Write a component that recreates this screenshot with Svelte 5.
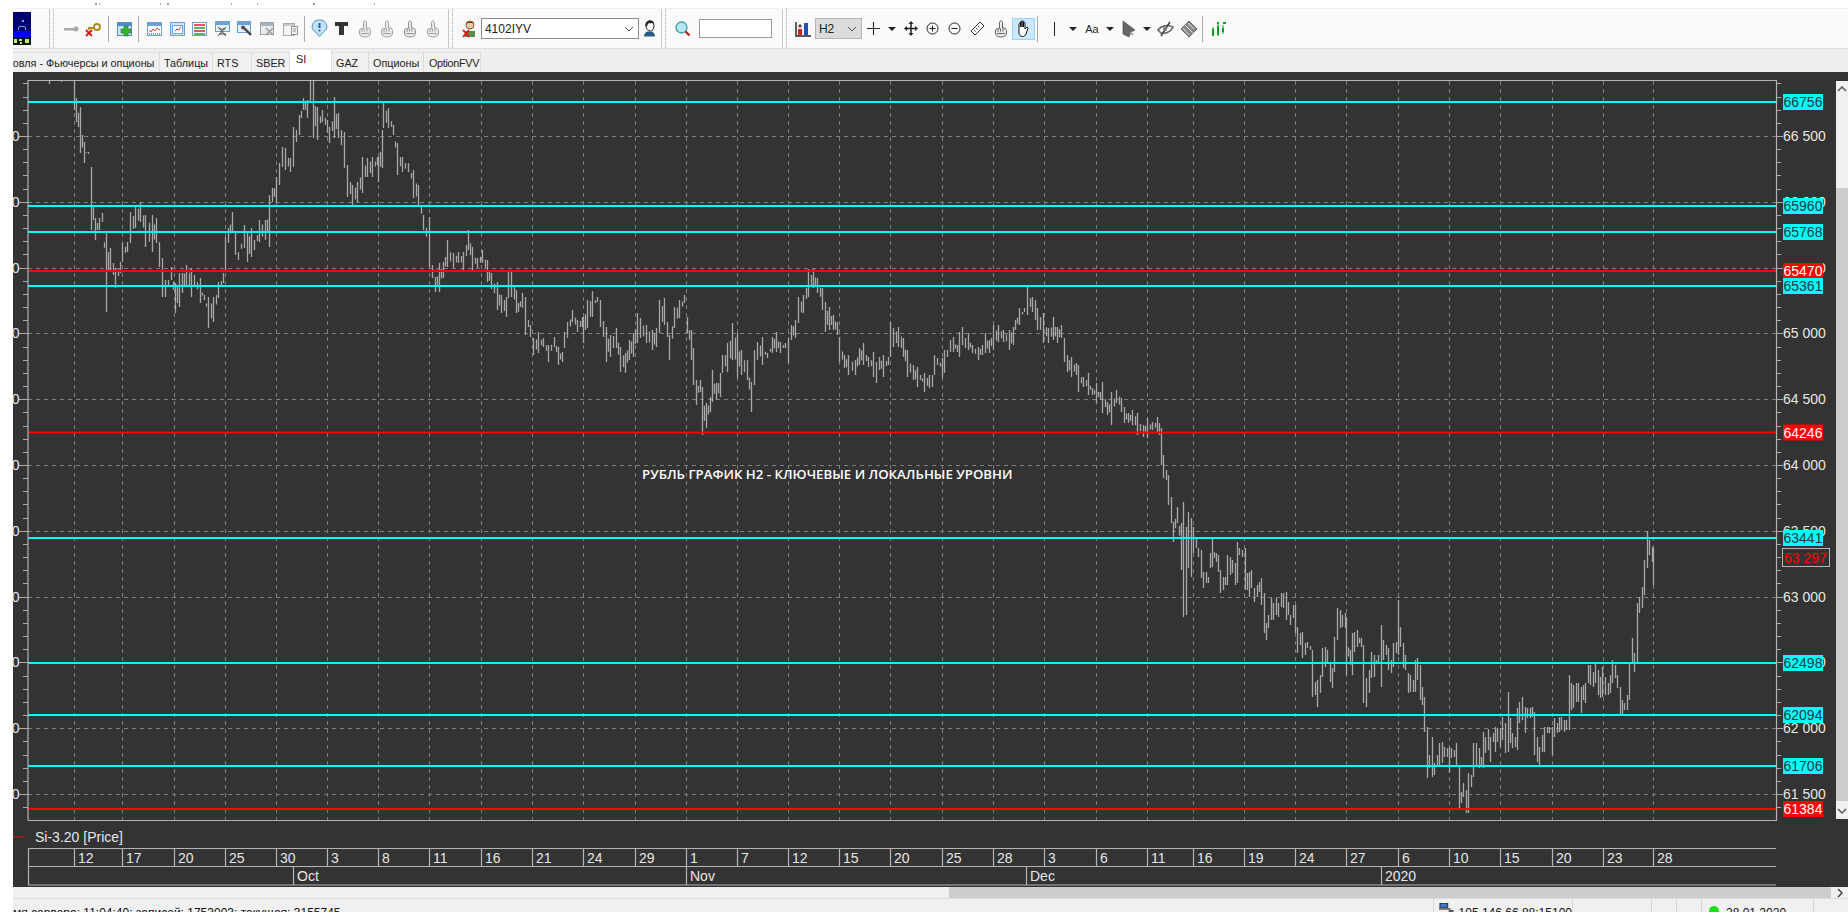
<script>
  const raw = "49 80 84,61 80 82,74 80 110,76 98 122,80 107 153,84 142 163,88 152 154,91 167 230,95 218 240,99 218 230,102 213 222,106 233 312,108 252 270,110 248 272,115 268 288,120 262 273,122 243 262,127 242 252,130 212 243,135 207 228,140 202 222,145 215 247,152 215 252,156 218 243,159 242 267,162 258 297,165 280 297,168 280 287,171 267 280,175 283 313,179 273 307,182 273 293,186 265 287,191 268 297,194 275 287,200 278 303,204 295 300,208 297 328,213 297 322,218 282 298,223 273 283,225 237 270,228 228 243,232 212 233,235 233 255,238 252 260,244 225 248,247 233 262,251 228 257,254 240 250,259 220 242,265 220 240,269 195 247,272 188 202,276 177 203,279 163 185,282 147 167,285 148 170,290 158 172,293 127 167,299 115 135,303 98 110,307 100 118,310 80 102,313 80 138,317 107 140,322 110 122,327 120 133,329 127 143,334 97 138,338 113 138,344 132 168,347 165 197,352 185 205,357 182 202,362 157 193,367 158 177,372 157 177,377 157 165,378 157 182,382 130 168,383 103 128,388 108 128,393 125 135,397 143 175,402 157 172,408 163 172,413 170 198,418 185 207,423 215 230,429 217 267,432 265 278,435 277 292,439 263 292,443 262 278,447 240 267,453 253 268,458 252 263,463 252 270,468 230 250,472 247 270,477 258 268,482 250 263,487 260 282,491 273 289,497 282 310,501 295 313,506 297 317,508 270 298,511 270 297,516 290 313,518 303 312,522 293 308,525 297 335,530 325 337,533 338 355,538 332 353,543 338 347,548 345 362,554 337 347,558 347 365,562 352 362,564 332 348,567 322 338,572 310 322,577 320 332,582 317 327,583 317 343,587 300 328,592 291 317,597 297 302,600 300 327,606 327 362,610 335 357,616 328 348,620 347 372,625 353 373,629 340 360,633 333 357,637 313 343,640 318 338,646 325 343,652 330 350,656 328 347,659 300 333,664 298 325,669 335 360,674 307 328,679 300 318,684 295 303,687 317 333,691 330 360,693 348 385,696 380 405,700 380 392,702 387 435,706 403 428,710 397 412,712 370 402,716 383 400,720 373 397,722 355 373,727 343 372,732 323 360,737 333 378,741 350 375,747 360 380,751 382 412,754 350 385,757 342 360,762 337 365,767 353 358,772 337 353,776 332 352,780 342 353,785 343 348,788 338 363,791 325 340,795 320 338,798 297 323,803 295 313,808 269 297,813 269 288,817 278 293,822 288 310,825 302 332,829 307 330,833 315 330,837 322 335,839 337 362,844 355 368,848 355 375,855 360 375,859 348 365,863 343 365,868 357 367,873 352 377,876 362 383,879 357 370,883 355 377,888 357 365,890 322 357,893 328 347,898 327 347,903 338 357,907 350 377,913 365 380,917 367 387,920 375 380,924 373 392,929 375 388,932 375 387,934 355 375,937 358 365,942 358 378,944 350 373,947 350 357,950 340 352,953 337 352,957 345 352,959 332 357,962 327 345,965 338 348,968 333 350,972 345 353,978 347 360,982 345 355,985 333 353,989 340 353,993 325 350,998 325 342,1003 330 342,1009 330 350,1013 327 345,1015 320 330,1019 308 325,1024 308 312,1027 287 315,1032 297 312,1035 300 320,1037 308 330,1043 313 343,1048 328 343,1053 317 340,1057 327 343,1061 325 338,1064 338 362,1067 355 372,1071 357 377,1076 363 375,1078 365 392,1083 377 387,1088 373 395,1092 388 395,1096 383 403,1100 392 400,1102 382 413,1107 402 415,1111 392 425,1116 390 403,1121 398 412,1124 407 423,1128 413 423,1132 410 425,1137 413 435,1143 425 437,1147 418 438,1152 422 430,1157 417 432,1159 423 435,1161 428 465,1163 455 478,1166 470 480,1168 475 505,1171 497 523,1173 522 542,1177 507 523,1181 523 570,1183 502 617,1186 527 615,1188 512 568,1191 518 577,1193 527 553,1196 537 548,1198 548 557,1201 550 578,1203 572 588,1206 572 583,1208 577 583,1210 553 568,1212 538 567,1216 553 562,1218 555 572,1220 570 593,1223 577 590,1225 577 585,1227 555 585,1230 557 575,1232 560 573,1235 563 585,1237 542 583,1239 548 555,1242 550 557,1245 548 590,1247 573 590,1249 572 597,1251 570 588,1254 588 602,1257 585 597,1259 582 592,1261 578 605,1264 593 633,1266 623 640,1268 615 628,1271 598 620,1273 603 620,1276 598 615,1278 603 617,1281 593 607,1283 593 608,1286 592 620,1288 602 615,1290 615 625,1293 605 618,1295 605 633,1297 627 653,1300 633 645,1302 632 658,1305 643 655,1307 642 648,1310 646 650,1312 650 697,1315 682 695,1317 680 707,1320 675 693,1322 648 677,1325 647 667,1327 650 662,1330 663 682,1332 668 688,1334 637 672,1337 608 640,1340 610 628,1342 615 627,1345 613 628,1346 618 675,1350 650 665,1352 633 675,1354 632 652,1357 630 647,1361 638 647,1363 645 703,1366 678 707,1369 670 693,1371 652 678,1374 655 677,1378 655 662,1381 625 687,1383 640 660,1386 645 655,1388 648 670,1391 660 673,1393 643 667,1396 642 653,1398 600 655,1400 627 647,1403 643 668,1405 655 670,1408 673 693,1410 675 692,1413 680 692,1415 660 692,1417 658 680,1420 665 700,1422 687 705,1424 697 732,1427 727 778,1429 755 768,1432 737 777,1434 763 775,1437 755 765,1439 743 765,1442 742 763,1444 747 757,1447 748 757,1449 747 773,1451 748 758,1454 750 757,1456 743 767,1459 767 808,1461 792 803,1463 783 797,1466 790 813,1468 773 813,1471 775 787,1473 743 777,1476 743 765,1479 748 768,1481 757 765,1483 732 768,1485 737 753,1488 729 750,1490 737 762,1493 733 742,1495 727 752,1497 728 742,1500 728 747,1502 717 740,1505 723 753,1508 692 752,1510 718 743,1512 733 748,1515 737 747,1517 708 750,1519 702 723,1522 697 720,1525 707 733,1527 708 718,1530 708 718,1532 707 717,1534 712 755,1537 737 762,1539 747 765,1542 735 752,1544 727 752,1547 727 733,1549 727 733,1552 727 755,1554 718 737,1557 723 733,1559 717 732,1561 717 730,1564 720 732,1566 720 730,1569 675 730,1571 683 710,1573 685 708,1576 683 702,1578 683 702,1581 687 713,1583 685 700,1585 683 703,1588 665 683,1590 665 685,1593 672 687,1595 663 683,1598 670 695,1600 677 698,1602 667 697,1605 677 695,1608 683 695,1610 675 693,1612 660 683,1615 665 678,1617 675 688,1620 687 715,1622 700 715,1624 703 710,1627 695 710,1629 663 700,1632 638 662,1634 653 672,1637 603 663,1639 597 613,1642 587 608,1644 560 595,1647 531 568,1649 540 555,1652 547 562,1653 548 585";

  const traced = raw.split(",").map((s) => s.split(" ").map(Number));
  const bars = [];
  traced.forEach((b, i) => {
    bars.push(b);
    const n = traced[i + 1];
    if (n && n[0] - b[0] >= 4 && b[0] > 70) {
      const mid = (b[1] + b[2] + n[1] + n[2]) / 4;
      const half = Math.min(b[2] - b[1], n[2] - n[1]) * 0.3;
      bars.push([Math.round((b[0] + n[0]) / 2), mid - half, mid + half]);
    }
  });
  const barPath = bars.map(([x, a, b]) => `M${x + 0.5} ${a}V${b}`).join("");

  const Y = (v) => 136 + (66500 - v) * 0.1316;
  const ticksX = [74,122,174,225,276,327,378,429,481,532,583,635,686,737,788,839,890,942,993,1044,1096,1147,1193,1244,1295,1346,1398,1449,1500,1552,1603,1653];
  const dayLabels = [12,17,20,25,30,3,8,11,16,21,24,29,1,7,12,15,20,25,28,3,6,11,16,19,24,27,6,10,15,20,23,28];
  const months = [["Oct",293],["Nov",686],["Dec",1026],["2020",1381]];
  const majors = [66500,66000,65500,65000,64500,64000,63500,63000,62500,62000,61500];
  const fmt = (v) => String(v).slice(0,2) + " " + String(v).slice(2);
  const minor = [];
  for (let k = -4; k <= 51; k++) {
    const y = 136 + k * 13.16;
    if (y > 81 && y < 819) minor.push(Math.round(y) + 0.5);
  }
  const levels = [
    [66756,"c",102],[65960,"c",206],[65768,"c",232],[65470,"r",271],[65361,"c",286],
    [64246,"r",432.5],[63441,"c",538],[62498,"c",663],[62094,"c",715],[61706,"c",766],[61384,"r",809]
  ];
  const minorPath = minor.map((y) => `M23 ${y}H28M1776 ${y}H1781`).join("");
  const topMarks = [95,99,160,167,231,257,313,374];
  const tabs = [
    ["товля - Фьючерсы и опционы", 147, "first"],
    ["Таблицы", 53, ""],["RTS", 39, ""],["SBER", 38, ""],["SI", 42, "active"],
    ["GAZ", 37, ""],["Опционы", 55, ""],["OptionFVV", 57, "tight"]
  ];
</script>

{#snippet chev()}
  <svg class="chev" width="10" height="6" viewBox="0 0 10 6"><path d="M1 1l4 4 4-4" fill="none" stroke="#555" stroke-width="1"/></svg>
{/snippet}

{#snippet hand(c)}
  <svg width="14" height="18" viewBox="0 0 14 18"><path d="M5.500 2.500c0-2 3-2 3 0V8h1.500c1.500 0 2.500 1 2.500 2.500V13c0 2.500-2 4-5.500 4S1.500 15.500 1.500 13v-2c0-1.500 1-2.500 2-2.500h2z" fill="#e9e9e9" stroke={c}/><path d="M4 9v3M6.500 8.500v3M9 8.500v3M3 13.500h8" stroke={c} fill="none"/></svg>
{/snippet}

<div class="page">
  <div class="strip">
    {#each topMarks as x, i}
      <i class="mark" class:wide={i % 3 === 0} style="left:{x}px"></i>
    {/each}
  </div>

  <div class="toolbar">
    <div class="logo">
      <svg width="18" height="33" viewBox="0 0 18 33"><rect width="18" height="33" fill="#00006e"/><rect y="19" width="18" height="6" fill="#0000f0"/><rect y="25" width="18" height="8" fill="#041a08"/><path d="M9 8h2v2H9zM5 15h1v3H5zM6 14h6v1H6zM12 15h1v3h-1z" fill="#5fb0e0"/><path d="M1 27h3v4H1zM6 27h3v2H6zM7 30h2v2H7zM12 27h4v4h-4z" fill="#c8e878"/></svg>
    </div>
    <span class="grip ml18"></span>
    <span class="ic ml6"><svg width="16" height="16" viewBox="0 0 16 16"><circle cx="13" cy="8" r="2.500" fill="#a8a8a8"/><rect x="1" y="7" width="10" height="2.500" fill="#a8a8a8"/></svg></span>
    <span class="ic"><svg width="16" height="16" viewBox="0 0 16 16"><circle cx="12" cy="6" r="3" fill="none" stroke="#a88a10" stroke-width="1.800"/><path d="M9 7H4v2" fill="none" stroke="#a88a10" stroke-width="1.800"/><path d="M1 9l6 6M7 9l-6 6" stroke="#e01010" stroke-width="1.800"/></svg></span>
    <span class="sep ml4"></span>
    <span class="ic ml5"><svg width="16" height="16" viewBox="0 0 16 16"><rect x=".5" y="1.500" width="14" height="13" fill="#cfe4f7" stroke="#5a8fc8"/><rect x="1" y="2" width="13" height="3" fill="#4f8ccf"/><path d="M7 5h4v3h3v4h-3v3H7v-3H4V8h3z" fill="#35b535" stroke="#1b7d1b" stroke-width=".6"/></svg></span>
    <span class="sep ml2"></span>
    <span class="wins ml4">
      <span class="ic23"><svg width="15" height="14" viewBox="0 0 15 14"><rect x=".5" y=".5" width="14" height="13" fill="#fff" stroke="#6a9fd8"/><rect x="1" y="1" width="13" height="3" fill="#6a9fd8"/><path d="M2 8l2 2 2-3 2 2 2-3 3 2" fill="none" stroke="#d04040"/><path d="M2 12h11" stroke="#3a7ac0" stroke-width="1.500" stroke-dasharray="1 1"/></svg></span>
      <span class="ic23"><svg width="15" height="14" viewBox="0 0 15 14"><rect x=".5" y=".5" width="14" height="13" fill="#cfe4f7" stroke="#6a9fd8"/><rect x="2.500" y="3.500" width="10" height="8" fill="#fff" stroke="#6a9fd8"/><path d="M5 9l2-2 2 1 2-3" fill="none" stroke="#d04040"/></svg></span>
      <span class="ic23"><svg width="15" height="14" viewBox="0 0 15 14"><rect x=".5" y=".5" width="14" height="13" fill="#fff" stroke="#6a9fd8"/><path d="M2 3h11" stroke="#d82020" stroke-width="1.500"/><path d="M2 6h11" stroke="#2a9a2a" stroke-width="1.500"/><path d="M2 9h11" stroke="#d82020" stroke-width="1.500"/><path d="M2 12h11" stroke="#2a9a2a" stroke-width="1.500"/></svg></span>
      <span class="ic23"><svg width="15" height="16" viewBox="0 0 15 16"><rect x=".5" y=".5" width="14" height="10" fill="#eaf3fb" stroke="#6a9fd8"/><rect x="1" y="1" width="13" height="3" fill="#6a9fd8"/><path d="M3 6l8 9M11 6l-8 9M4 13h7M5 8h5" stroke="#444" fill="none"/></svg></span>
      <span class="ic23"><svg width="16" height="15" viewBox="0 0 16 15"><rect x=".5" y=".5" width="13" height="11" fill="#e4f0fa" stroke="#6a9fd8"/><rect x="1" y="1" width="12" height="3" fill="#6a9fd8"/><path d="M6 6l8 8" stroke="#444" stroke-width="2.400"/><circle cx="6" cy="6.500" r="2" fill="#555"/></svg></span>
      <span class="ic23"><svg width="15" height="14" viewBox="0 0 15 14"><rect x=".5" y=".5" width="13" height="12" fill="#ececec" stroke="#9aa4ae"/><rect x="1" y="1" width="12" height="3" fill="#aab4be"/><path d="M6 6l7 7M13 6l-7 7" stroke="#9a9a9a" stroke-width="1.500"/></svg></span>
      <span class="ic23"><svg width="15" height="14" viewBox="0 0 15 14"><rect x=".5" y="1.500" width="11" height="12" fill="#f6f6f6" stroke="#aaa"/><rect x="1" y="2" width="10" height="2" fill="#c4cad0"/><rect x="8.500" y="4.500" width="6" height="8" fill="#eee" stroke="#999"/><path d="M10 7h3M10 9h3" stroke="#999"/></svg></span>
    </span>
    <span class="sep ml2"></span>
    <span class="wins ml3">
      <span class="ic23"><svg width="17" height="19" viewBox="0 0 17 19"><path d="M8.500 1a7 6.500 0 0 1 4 12l-4 4.500-4-4.500a7 6.500 0 0 1 4-12z" fill="#bfe2f7" stroke="#5792c0"/><path d="M8.500 4v5" stroke="#2c5f9e" stroke-width="2"/><circle cx="8.500" cy="11.500" r="1.100" fill="#2c5f9e"/></svg></span>
      <span class="ic23"><svg width="15" height="15" viewBox="0 0 15 15"><path d="M1 1h13v4h-4v9H5V5H1z" fill="#333"/></svg></span>
      <span class="ic23">{@render hand("#a0a0a0")}</span>
      <span class="ic23">{@render hand("#a0a0a0")}</span>
      <span class="ic23">{@render hand("#909090")}</span>
      <span class="ic23">{@render hand("#a0a0a0")}</span>
    </span>
    <span class="grip ml4"></span>
    <span class="ic ml6"><svg width="16" height="18" viewBox="0 0 16 18"><circle cx="8" cy="5" r="4" fill="#eec9a0" stroke="#6a4020" stroke-width=".8"/><path d="M4 4c0-3 8-3 8 0l-2-1H6z" fill="#6a3a15"/><path d="M3 11h10v6H3z" fill="#5a8a4a"/><path d="M1 10l6 7M7 10l-6 7" stroke="#e01010" stroke-width="1.800"/></svg></span>
    <div class="combo acct"><span>4102IYV</span>{@render chev()}</div>
    <span class="ic"><svg width="13" height="17" viewBox="0 0 13 17"><path d="M3 6c0-4 2-5 4-5s4 1.500 4 5c0 3-1.500 5-3.500 5S3 9 3 6z" fill="#fff" stroke="#222"/><path d="M2.500 6C2 2 5 .5 7 .5s4.500 1.500 4 4l-2-1.500-4 .5-1 3z" fill="#222"/><path d="M1 16.500c0-3 2-5 4-5h3c2 0 4 2 4 5z" fill="#2a5a8a"/></svg></span>
    <span class="grip"></span>
    <span class="ic ml6"><svg width="16" height="16" viewBox="0 0 16 16"><circle cx="6.500" cy="6.500" r="5.500" fill="#b8e6f0" stroke="#3a9ab0" stroke-width="1.300"/><path d="M10.500 10.500l4 4" stroke="#c22020" stroke-width="2.400"/></svg></span>
    <span class="search ml5"></span>
    <span class="grip ml10"></span>
    <span class="ic ml5"><svg width="16" height="16" viewBox="0 0 16 16"><path d="M1 1v14h15" fill="none" stroke="#222" stroke-width="1.400"/><rect x="3" y="8" width="4" height="6" fill="#e02020"/><rect x="9" y="2" width="4" height="12" fill="#2050c0"/><path d="M5 3v4M3 5h4" stroke="#222"/></svg></span>
    <div class="combo tf"><span>H2</span>{@render chev()}</div>
    <span class="ic ml1"><svg width="13" height="13" viewBox="0 0 13 13"><path d="M6.500 0v13M0 6.500h13" stroke="#222" stroke-width="1.100"/></svg></span>
    <span class="ar"></span>
    <span class="ic ml1"><svg width="14" height="15" viewBox="0 0 14 15"><path d="M7 0l2.500 3h-5zM7 15l2.500-3h-5zM0 7.500l3-2.500v5zM14 7.500l-3-2.500v5z" fill="#222"/><path d="M7 2v11M2 7.500h10" stroke="#222" stroke-width="1.500"/></svg></span>
    <span class="ic"><svg width="13" height="13" viewBox="0 0 13 13"><circle cx="6.500" cy="6.500" r="5.500" fill="none" stroke="#222"/><path d="M6.500 3.500v6M3.500 6.500h6" stroke="#222"/></svg></span>
    <span class="ic"><svg width="13" height="13" viewBox="0 0 13 13"><circle cx="6.500" cy="6.500" r="5.500" fill="none" stroke="#222"/><path d="M3.500 6.500h6" stroke="#222"/></svg></span>
    <span class="ic ml1"><svg width="15" height="15" viewBox="0 0 15 15"><path d="M10 1l4 4-9 9-4-4z" fill="#fff" stroke="#333"/><path d="M4 9l1.500 1.500M6 7l1.500 1.500M8 5l1.500 1.500" stroke="#333"/></svg></span>
    <span class="ic ml1">{@render hand("#666")}</span>
    <span class="active-tool">
      <svg width="15" height="17" viewBox="0 0 15 17"><path d="M3 9V4c0-1 1.500-1 1.500 0v3-5c0-1 1.500-1 1.500 0v5V1.500c0-1 1.500-1 1.500 0V7V3c0-1 1.500-1 1.500 0v6l1.500-1.500c1-.8 2 .2 1.300 1.200L10 14c-.8 1.500-1.500 2.500-3.500 2.500S3 15 3 13z" fill="#fff" stroke="#111"/></svg>
    </span>
    <span class="sep ml2"></span>
    <span class="ic ml6"><svg width="3" height="14" viewBox="0 0 3 14"><path d="M1.500 0v14" stroke="#222"/></svg></span>
    <span class="ar"></span>
    <span class="ic ml1 aa">Aa</span>
    <span class="ar"></span>
    <span class="ic ml1"><svg width="16" height="18" viewBox="0 0 16 18"><path d="M2 1l8 6 4 3-4 2-2 5-6-3z" fill="#666" stroke="#444" stroke-width=".6"/><path d="M9 12l3 3" stroke="#999" stroke-width="1.500"/></svg></span>
    <span class="ar"></span>
    <span class="ic ml1"><svg width="17" height="16" viewBox="0 0 17 16"><path d="M1 9c3-4 9-6 15-3-2 5-8 7-12 6z" fill="none" stroke="#666" stroke-width="1.600"/><path d="M13 1L4 15" stroke="#444" stroke-width="1.600"/><circle cx="8" cy="8" r="2" fill="#777"/></svg></span>
    <span class="ic ml1"><svg width="18" height="18" viewBox="0 0 18 18"><path d="M1 9l8-8 8 8-8 8z" fill="#8a8a8a" stroke="#666"/><path d="M5 5l8 8M8 3l6 6M3 8l6 7" stroke="#d8d8d8"/></svg></span>
    <span class="sep ml2"></span>
    <span class="ic ml5"><svg width="16" height="16" viewBox="0 0 16 16"><path d="M1 8h2v7H1zM6 5h2v9H6zM6 1h2v2H6zM11 7h2v4h-2zM12 1h3v2h-3z" fill="#0aa020"/><path d="M2 6v9M7 3v12M12 4v9" stroke="#0aa020"/></svg></span>
  </div>

  <div class="tabs">
    {#each tabs as [label, w, kind]}
      <div class="tab {kind}" style="width:{w}px"><span>{label}</span></div>
    {/each}
  </div>

  <div class="main">
    <svg class="chart" width="1823" height="815" viewBox="13 72 1823 815">
      <g class="grid">
        {#each ticksX as x}<path d="M{x + 0.5} 81V820"/>{/each}
        {#each majors as v}<path d="M28 {Math.round(Y(v)) + 0.5}H1776"/>{/each}
      </g>
      <path class="bars" d={barPath}/>
      <g class="levels">
        {#each levels as [v, c, y]}
          <path class={c} d="M28 {y}H1776"/>
        {/each}
      </g>
      <path class="ticks" d={minorPath}/>
      <g class="ticks">
        {#each majors as v}<path d="M19 {Math.round(Y(v)) + 0.5}H28M1776 {Math.round(Y(v)) + 0.5}H1783"/>{/each}
      </g>
      <path class="frame" d="M28 820.5V80.500H1776.500V820.500H28"/>

      {#each majors as v}
        <text class="ax" x="1783" y={Y(v) + 5}>{fmt(v)}</text>
        <text class="ax" x="19.500" y={Y(v) + 5} text-anchor="end">{fmt(v)}</text>
      {/each}

      {#each levels as [v, c, y]}
        <rect class={c} x="1783" y={y - 8} width="40" height="16"/>
        <text class="lv {c}" x="1783.500" y={y + 5}>{v}</text>
      {/each}

      <rect class="last" x="1782.500" y="548.500" width="47" height="18"/>
      <text class="lastt" x="1784" y="563">63 297</text>

      <text class="title" x="642" y="478.500">РУБЛЬ ГРАФИК Н2 - КЛЮЧЕВЫЕ И ЛОКАЛЬНЫЕ УРОВНИ</text>

      <path class="legend" d="M13 837H25"/>
      <text class="ax" x="35" y="842">Si-3.20 [Price]</text>

      <path class="frame" d="M28 848.500H1776M28 866.500H1776M28 885H1776M28.500 848V885"/>
      {#each ticksX as x, i}
        <path class="frame" d="M{x + 0.5} 848V866"/>
        <text class="ax" x={x + 4} y="863">{dayLabels[i]}</text>
      {/each}
      {#each months as [m, x]}
        <path class="frame" d="M{x + 0.5} 866V885"/>
        <text class="ax" x={x + 4} y="881">{m}</text>
      {/each}
    </svg>
    <div class="vscroll">
      <div class="vtrack">
        <svg width="10" height="7" viewBox="0 0 10 7"><path d="M1 6l4-4 4 4" fill="none" stroke="#555" stroke-width="1.500"/></svg>
        <div class="vthumb"></div>
        <svg width="10" height="7" viewBox="0 0 10 7"><path d="M1 1l4 4 4-4" fill="none" stroke="#555" stroke-width="1.500"/></svg>
      </div>
    </div>
  </div>

  <div class="hscroll">
    <div class="hthumb"></div>
    <svg width="8" height="10" viewBox="0 0 8 10"><path d="M2 1l4 4-4 4" fill="none" stroke="#444" stroke-width="1.500"/></svg>
  </div>

  <div class="status">
    <span class="st-text">мя сервера: 11:04:40; записей: 1753003; текущая: 3155745</span>
    <span class="cell net">
      <svg width="15" height="10" viewBox="0 0 15 10"><rect x="1" y="0" width="8" height="5" fill="#3a7ac0" stroke="#223"/><rect x="0" y="5" width="12" height="2" fill="#777"/><rect x="10" y="7" width="5" height="3" fill="#555"/></svg>
      <span>105.146.66.88:15100</span>
    </span>
    <span class="cell c2"></span>
    <span class="cell c3"></span>
    <span class="cell c3"></span>
    <span class="cell date"><i class="led"></i><span>28.01.2020</span></span>
    <span class="cell end"></span>
  </div>
</div>

<style>
  :global(body) { margin: 0; overflow: hidden; background: #fff; }
  .page { width: 1848px; height: 912px; display: flex; flex-direction: column; font-family: "Liberation Sans", Arial, sans-serif; background: #fff; overflow: hidden; }

  .strip { height: 8px; position: relative; background: #fff; flex: none; }
  .mark { position: absolute; top: 3px; width: 1px; height: 2px; background: #aaa; }
  .mark.wide { width: 2px; background: #999; }

  .toolbar { height: 41px; flex: none; box-sizing: border-box; margin-left: 13px; display: flex; align-items: center; background: #fafafa; border-top: 1px solid #f0f0f0; border-bottom: 1px solid #dedede; }
  .logo { height: 33px; width: 18px; flex: none; line-height: 0; }
  .grip { width: 5px; height: 39px; flex: none; box-sizing: border-box; border-left: 1px solid #c8c8c8; border-right: 1px dotted #a8a8a8; }
  .ic { width: 22px; height: 24px; flex: none; display: flex; align-items: center; justify-content: center; }
  .ic23 { width: 22.7px; height: 24px; flex: none; display: flex; align-items: center; justify-content: center; }
  .wins { display: flex; flex: none; }
  .sep { width: 1px; height: 26px; background: #a9a9a9; flex: none; }
  .ar { width: 0; height: 0; flex: none; margin: 0 3px; border-left: 4px solid transparent; border-right: 4px solid transparent; border-top: 4px solid #222; }
  .aa { font-size: 11px; color: #222; }
  .ml1 { margin-left: 1px; } .ml2 { margin-left: 2px; } .ml3 { margin-left: 3px; } .ml4 { margin-left: 4px; } .ml5 { margin-left: 5px; } .ml6 { margin-left: 6px; } .ml10 { margin-left: 10px; } .ml18 { margin-left: 18px; }

  .combo { height: 21px; box-sizing: border-box; flex: none; display: flex; align-items: center; justify-content: space-between; padding: 0 3px; font-size: 12px; color: #222; border: 1px solid #8c8c8c; background: #fff; }
  .acct { width: 158px; }
  .tf { width: 47px; margin-left: 1px; background: #dcdcdc; border-color: #b5b5b5; }
  .chev { margin-right: 1px; }
  .search { width: 73px; height: 19px; box-sizing: border-box; flex: none; background: #fff; border: 1.5px solid #9a9a9a; }
  .active-tool { width: 23px; height: 22px; box-sizing: border-box; flex: none; display: flex; align-items: center; justify-content: center; background: #cce8ff; border: 1px solid #99d1ff; }

  .tabs { height: 23px; flex: none; margin-left: 13px; display: flex; align-items: flex-end; background: #efefef; overflow: hidden; }
  .tab { height: 20px; box-sizing: border-box; flex: none; padding: 3px 0 0 4px; font-size: 10.800px; line-height: 14px; color: #222; white-space: nowrap; overflow: hidden; background: #f0f0f0; border-right: 1px solid #dcdcdc; border-top: 1px solid #e2e2e2; }
  .tab.first { padding-left: 0; }
  .tab.first span { margin-left: -5px; display: inline-block; }
  .tab.active { height: 22px; background: #fff; padding-top: 2px; padding-left: 6px; border-top: 0; }
  .tab.tight { letter-spacing: -0.3px; padding-left: 5px; }

  .main { height: 815px; flex: none; margin-left: 13px; display: flex; background: #333; }
  .chart { display: block; flex: none; }
  .vscroll { width: 12px; flex: none; padding-top: 9px; }
  .vtrack { height: 738px; background: #f0f0f0; display: flex; flex-direction: column; align-items: center; justify-content: space-between; padding: 4px 0; box-sizing: border-box; position: relative; }
  .vthumb { position: absolute; left: 0; right: 0; top: 107px; bottom: 18px; background: #cdcdcd; }

  .grid path { fill: none; stroke: #7e7e7e; stroke-width: 1; stroke-dasharray: 4 4; }
  .bars { fill: none; stroke: #a8a8a8; stroke-width: 1.300; }
  .levels path { fill: none; stroke-width: 2; }
  .levels path.c { stroke: #0ff; }
  .levels path.r { stroke: #f00; }
  .ticks, .ticks path { fill: none; stroke: #a9a9a9; stroke-width: 1; }
  .frame { fill: none; stroke: #b4b4b4; stroke-width: 1.200; }
  .ax { font: 14px "Liberation Sans", Arial, sans-serif; fill: #e6e6e6; }
  rect.c { fill: #0ff; }
  rect.r { fill: #f00; }
  .lv { font: 14px "Liberation Sans", Arial, sans-serif; }
  .lv.c { fill: #1e3a3a; }
  .lv.r { fill: #fff; }
  .last { fill: #333; stroke: #b4b4b4; stroke-width: 1; }
  .lastt { font: 14px "Liberation Sans", Arial, sans-serif; fill: #f00; }
  .title { font: 600 13.250px "Open Sans", sans-serif; fill: #fff; }
  .legend { stroke: #e01010; stroke-width: 1; }

  .hscroll { height: 11px; flex: none; margin-left: 13px; display: flex; align-items: center; background: #f0f0f0; }
  .hthumb { margin-left: 936px; width: 882px; height: 100%; background: #cdcdcd; }
  .hscroll svg { margin-left: 5px; }

  .status { flex: 1; min-height: 0; margin-left: 13px; display: flex; background: #f0f0f0; border-top: 1px solid #dcdcdc; font-size: 12px; color: #111; overflow: hidden; }
  .st-text { width: 1420px; flex: none; padding-top: 7px; line-height: 14px; white-space: nowrap; overflow: hidden; }
  .cell { flex: none; box-sizing: border-box; border-left: 1px solid #d4d4d4; display: flex; align-items: flex-start; line-height: 14px; }
  .net { width: 139px; padding: 4px 0 0 5px; gap: 5px; }
  .net span { margin-top: 3px; white-space: nowrap; }
  .c2 { width: 79px; }
  .c3 { width: 25px; }
  .date { width: 112px; padding: 7px 0 0 7px; gap: 7px; }
  .led { width: 10px; height: 10px; border-radius: 50%; background: #16e016; flex: none; }
  .end { width: 22px; }
</style>
